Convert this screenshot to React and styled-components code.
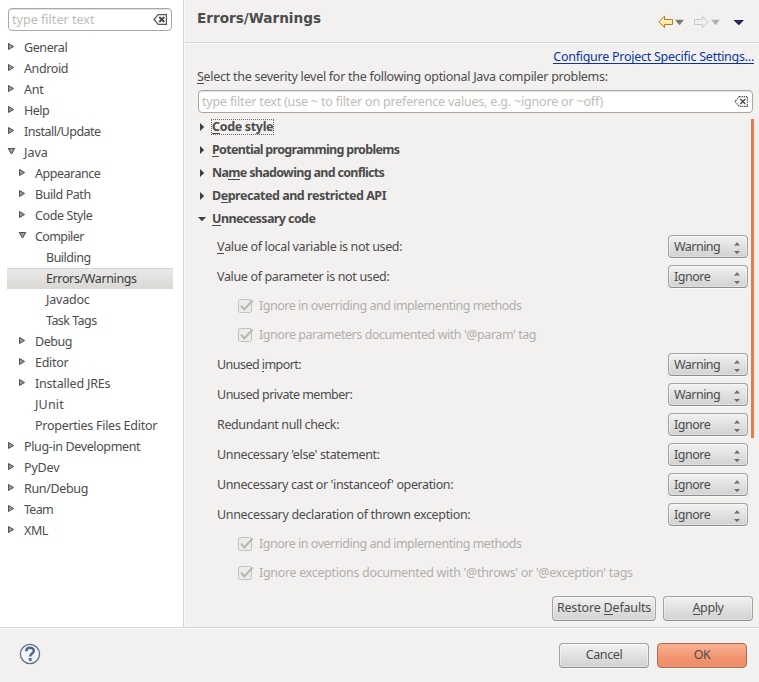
import React from "react";
import styled, { createGlobalStyle, css } from "styled-components";

const Global = createGlobalStyle`
  * { box-sizing: border-box; }
  body {
    margin: 0;
    background: #f2f1f0;
    color: #4c4c4c;
    font: 12.5px/20px "Noto Sans", sans-serif;
    overflow: hidden;
  }
`;

const Dialog = styled.div`
  width: 759px;
  height: 682px;
  display: flex;
  flex-direction: column;
  background: #f2f1f0;
`;
const Body = styled.div`
  height: 627px;
  display: flex;
`;
const Sidebar = styled.aside`
  width: 185px;
  background: #fff;
  border-right: 1px solid #f8f8f7;
  box-shadow: inset -1px 0 0 #d6d5d3;
  padding: 8px 0 0 7px;
`;
const Tracked = styled.span`
  letter-spacing: ${(p) => p.$track || 0}px;
  white-space: pre;
`;
const Mnemonic = styled.span`
  border-bottom: 1px solid currentColor;
  display: inline-block;
  line-height: 13px;
`;
const Field = styled.div`
  display: flex;
  align-items: center;
  justify-content: space-between;
  width: ${(p) => p.$width}px;
  height: 23px;
  margin-left: 1px;
  padding: 0 3px 0 3px;
  border: 1px solid #aaa7a1;
  border-radius: 4px;
  background: #fff;
  box-shadow: inset 0 1px 0 #e4e2df;
  color: #bfbbb5;
`;
const Tree = styled.ul`
  list-style: none;
  margin: 6px 0 0;
  padding: 0;
  width: 166px;
`;
const TreeRow = styled.li`
  display: flex;
  align-items: center;
  height: 21px;
  padding: 0 0 0 ${(p) => p.$level * 11}px;
  ${(p) =>
    p.$selected &&
    css`
      padding-bottom: 1px;
      background: linear-gradient(#eae9e7, #d9d8d5);
      border-top: 1px solid #d3d2cf;
      color: #3c3c3c;
    `}
`;
const Twisty = styled.span`
  display: flex;
  width: 17px;
  height: 10px;
  margin-bottom: 2px;
  flex: none;
`;
const Main = styled.main`
  width: 574px;
  display: flex;
  flex-direction: column;
`;
const Header = styled.header`
  height: 43px;
  display: flex;
  align-items: flex-start;
  justify-content: space-between;
  padding: 8px 14px 0 12px;
  border-bottom: 1px solid #d9d8d6;
  box-shadow: 0 1px 0 #f9f9f8;
`;
const Title = styled.h1`
  margin: 0;
  font: bold 13.6px/20px "DejaVu Sans", sans-serif;
`;
const History = styled.div`
  display: flex;
  padding-top: 7px;
`;
const LinkRow = styled.div`
  display: flex;
  justify-content: flex-end;
  height: 23px;
  padding: 7px 5px 0 0;
`;
const SettingsLink = styled.a`
  height: 14px;
  line-height: 13px;
  color: #0d359f;
  border-bottom: 1px solid #0d359f;
`;
const Prompt = styled.div`
  height: 24px;
  padding: 1px 0 0 12px;
`;
const FilterRow = styled.div`
  padding-left: 12px;
  height: 26px;
`;
const Scroller = styled.div`
  display: flex;
  justify-content: space-between;
  height: 480px;
  padding: 0 5px 0 12px;
`;
const Thumb = styled.div`
  width: 3px;
  height: 319px;
  margin-top: 3px;
  background: #f07746;
`;
const Options = styled.div`
  width: 551px;
`;
const SectionRow = styled.div`
  display: flex;
  align-items: center;
  height: 23px;
  padding-bottom: 1px;
  font-weight: bold;
`;
const SectionArrow = styled.span`
  display: flex;
  width: 15px;
  padding-left: 1px;
`;
const SectionName = styled.span`
  display: flex;
  align-items: center;
  height: 14px;
  ${(p) =>
    p.$focused &&
    css`
      outline: 1px dotted #6c6a67;
    `}
`;
const Settings = styled.div`
  padding: 1px 0 0 20px;
`;
const SettingRow = styled.div`
  display: flex;
  align-items: center;
  justify-content: space-between;
  height: 30px;
  padding-bottom: 1px;
`;
const CheckRow = styled.div`
  display: flex;
  align-items: center;
  height: 29px;
  padding: 0 0 1px 20px;
  gap: 5px;
  color: #b1aeaa;
`;
const raised = css`
  border: 1px solid #a5a3a0;
  border-bottom-color: #8f8d8a;
  border-radius: 4px;
  background: linear-gradient(#f2f2f2, #dedede 60%, #d2d2d2);
  box-shadow: inset 0 0 0 1px rgba(255, 255, 255, 0.35), 0 1px 0 #fafafa;
`;
const Combo = styled.div`
  ${raised}
  display: flex;
  align-items: center;
  justify-content: space-between;
  width: 80px;
  height: 23px;
  padding: 0 5px;
`;
const ButtonRow = styled.div`
  display: flex;
  justify-content: flex-end;
  gap: ${(p) => p.$gap}px;
`;
const PageButtons = styled(ButtonRow)`
  padding-right: 6px;
`;
const Button = styled.button`
  ${raised}
  width: ${(p) => p.$width || 90}px;
  height: 25px;
  padding: 0 0 1px;
  color: inherit;
  font: inherit;
  line-height: 20px;
  ${(p) =>
    p.$primary &&
    css`
      border-color: #a66f58;
      background: linear-gradient(#fab194, #f2946f 60%, #ee8d66);
      box-shadow: inset 0 0 0 1px rgba(255, 150, 110, 0.3), 0 1px 0 #fafafa;
    `}
`;
const Footer = styled.footer`
  height: 55px;
  display: flex;
  align-items: flex-start;
  justify-content: space-between;
  padding: 15px 12px 0 19px;
  border-top: 1px solid #d9d8d6;
  box-shadow: inset 0 1px 0 #f9f9f8;
`;

function Text({ text, track, mark = -1 }) {
  return (
    <Tracked $track={track}>
      {mark < 0 ? text : (
        <>
          {text.slice(0, mark)}
          <Mnemonic>{text[mark]}</Mnemonic>
          {text.slice(mark + 1)}
        </>
      )}
    </Tracked>
  );
}

function TreeArrow({ open }) {
  return (
    <svg width="9" height="9">
      <path
        d={open ? "M1.2 1.5H7.8L4.5 7Z" : "M1.5 1.5V7.5L6.6 4.5Z"}
        fill="#9a9a9a"
        stroke="#4f4f4f"
      />
    </svg>
  );
}

function ClearIcon({ dotted }) {
  return (
    <svg width="15" height="11">
      <path
        d="M5.2 .7H13.4V10.3H5.2L1 5.5Z"
        fill="#fff"
        stroke="#555"
        strokeWidth="1.2"
        strokeDasharray={dotted ? "1.4 .8" : undefined}
      />
      <path d="M6.3 3 11.3 8M11.3 3 6.3 8" stroke="#444" strokeWidth={dotted ? 1.3 : 1.8} />
    </svg>
  );
}

function HistoryIcons() {
  return (
    <svg width="87" height="14">
      <defs>
        <linearGradient id="gold" x1="0" x2="0" y1="0" y2="1">
          <stop offset="0" stopColor="#fffbe0" />
          <stop offset="1" stopColor="#f8dc86" />
        </linearGradient>
      </defs>
      <path d="M.8 6.9 6.5 1.3V4.5H14.5V9.5H6.5V12.6Z" fill="url(#gold)" stroke="#b27c10" strokeLinejoin="round" />
      <path d="M17.5 5H25.5L21.5 10Z" fill="#777" stroke="#8a8a8a" strokeWidth=".6" />
      <path d="M50.2 6.9 44.5 1.3V4.5H36.5V9.5H44.5V12.6Z" fill="#f0efee" stroke="#cac9c7" strokeLinejoin="round" />
      <path d="M53.5 5H61.5L57.5 10Z" fill="#aeaeae" stroke="#bdbdbd" strokeWidth=".6" />
      <path d="M75.5 5H86L80.8 10.2Z" fill="#16163c" />
      <path d="M78 5.8H83L80.5 8.3Z" fill="#3d3d82" />
    </svg>
  );
}

function CheckIcon() {
  return (
    <svg width="17" height="16">
      <rect x="1.5" y="1.5" width="13" height="13" rx="2" fill="#edecea" stroke="#c3c1be" />
      <path d="M4 7.6 7.3 11.4 15.6 2.4" fill="none" stroke="#bab8b5" strokeWidth="2.2" />
    </svg>
  );
}

function Select({ value }) {
  return (
    <Combo>
      <Text text={value} track={value === "Warning" ? -0.53 : -0.5} />
      <svg width="10" height="16">
        <path d="M2 6.4 5 3.2 8 6.4ZM2 12 5 15 8 12Z" fill="#6a6a6a" />
      </svg>
    </Combo>
  );
}

const tree = [
  ["General", 0, "closed", -0.4],
  ["Android", 0, "closed", -0.4],
  ["Ant", 0, "closed", -0.24],
  ["Help", 0, "closed", -0.5],
  ["Install/Update", 0, "closed", -0.5],
  ["Java", 0, "open", 0],
  ["Appearance", 1, "closed", -0.47],
  ["Build Path", 1, "closed", -0.43],
  ["Code Style", 1, "closed", -0.4],
  ["Compiler", 1, "open", -0.6],
  ["Building", 2, "", -0.49],
  ["Errors/Warnings", 2, "", -0.37],
  ["Javadoc", 2, "", -0.2],
  ["Task Tags", 2, "", -0.55],
  ["Debug", 1, "closed", -0.45],
  ["Editor", 1, "closed", -0.3],
  ["Installed JREs", 1, "closed", -0.2],
  ["JUnit", 1, "", 0.18],
  ["Properties Files Editor", 1, "", -0.27],
  ["Plug-in Development", 0, "closed", -0.37],
  ["PyDev", 0, "closed", -0.18],
  ["Run/Debug", 0, "closed", -0.35],
  ["Team", 0, "closed", -0.72],
  ["XML", 0, "closed", -0.4],
];

const sections = [
  ["Code style", 0, -0.33],
  ["Potential programming problems", 0, -0.69],
  ["Name shadowing and conflicts", 2, -0.68],
  ["Deprecated and restricted API", 1, -0.47],
  ["Unnecessary code", 0, -0.59],
];

const settings = [
  { text: "Value of local variable is not used:", value: "Warning", track: -0.37, mark: 0 },
  { text: "Value of parameter is not used:", value: "Ignore", track: -0.35 },
  { text: "Ignore in overriding and implementing methods", track: -0.48 },
  { text: "Ignore parameters documented with '@param' tag", track: -0.45 },
  { text: "Unused import:", value: "Warning", track: -0.55, mark: 7 },
  { text: "Unused private member:", value: "Warning", track: -0.51 },
  { text: "Redundant null check:", value: "Ignore", track: -0.38 },
  { text: "Unnecessary 'else' statement:", value: "Ignore", track: -0.36 },
  { text: "Unnecessary cast or 'instanceof' operation:", value: "Ignore", track: -0.38 },
  { text: "Unnecessary declaration of thrown exception:", value: "Ignore", track: -0.34 },
  { text: "Ignore in overriding and implementing methods", track: -0.48 },
  { text: "Ignore exceptions documented with '@throws' or '@exception' tags", track: -0.31 },
];

export default function App() {
  return (
    <Dialog>
      <Global />
      <Body>
        <Sidebar>
          <Field $width={164}>
            <Text text="type filter text" track={0.03} />
            <ClearIcon />
          </Field>
          <Tree>
            {tree.map(([name, level, state, track]) => (
              <TreeRow key={name} $level={level} $selected={name === "Errors/Warnings"}>
                <Twisty>{state && <TreeArrow open={state === "open"} />}</Twisty>
                <Text text={name} track={track} />
              </TreeRow>
            ))}
          </Tree>
        </Sidebar>
        <Main>
          <Header>
            <Title>Errors/Warnings</Title>
            <History><HistoryIcons /></History>
          </Header>
          <LinkRow>
            <SettingsLink>
              <Text text="Configure Project Specific Settings..." track={-0.26} />
            </SettingsLink>
          </LinkRow>
          <Prompt>
            <Text
              text="Select the severity level for the following optional Java compiler problems:"
              track={-0.28}
              mark={0}
            />
          </Prompt>
          <FilterRow>
            <Field $width={555}>
              <Text
                text="type filter text (use ~ to filter on preference values, e.g. ~ignore or ~off)"
                track={-0.19}
              />
              <ClearIcon dotted />
            </Field>
          </FilterRow>
          <Scroller>
            <Options>
              {sections.map(([name, mark, track], i) => (
                <SectionRow key={name}>
                  <SectionArrow>
                    <svg width="10" height="10">
                      <path d={i === 4 ? "M0 3H8L4 7.2Z" : "M2 1V9L6.2 5Z"} fill="#3f3f3f" />
                    </svg>
                  </SectionArrow>
                  <SectionName $focused={i === 0}>
                    <Text text={name} mark={mark} track={track} />
                  </SectionName>
                </SectionRow>
              ))}
              <Settings>
                {settings.map(({ text, value, track, mark }, i) =>
                  value ? (
                    <SettingRow key={i}>
                      <Text text={text} track={track} mark={mark} />
                      <Select value={value} />
                    </SettingRow>
                  ) : (
                    <CheckRow key={i}>
                      <CheckIcon />
                      <Text text={text} track={track} />
                    </CheckRow>
                  )
                )}
              </Settings>
            </Options>
            <Thumb />
          </Scroller>
          <PageButtons $gap={7}>
            <Button $width={104}><Text text="Restore Defaults" track={-0.18} mark={8} /></Button>
            <Button><Text text="Apply" track={-0.4} mark={0} /></Button>
          </PageButtons>
        </Main>
      </Body>
      <Footer>
        <svg width="22" height="22">
          <circle cx="11" cy="11" r="9.6" fill="#f4f5f7" stroke="#5c6f91" strokeWidth="1.3" />
          <path
            d="M7.2 8.2C7.2 3.8 14.8 3.8 14.8 7.8C14.8 10.4 11.2 10.6 11.2 13.4"
            fill="none"
            stroke="#526790"
            strokeWidth="2.5"
          />
          <rect x="9.8" y="15" width="2.9" height="2.9" rx=".8" fill="#526790" />
        </svg>
        <ButtonRow $gap={8}>
          <Button><Text text="Cancel" track={-0.4} /></Button>
          <Button $primary><Text text="OK" track={-0.5} /></Button>
        </ButtonRow>
      </Footer>
    </Dialog>
  );
}
